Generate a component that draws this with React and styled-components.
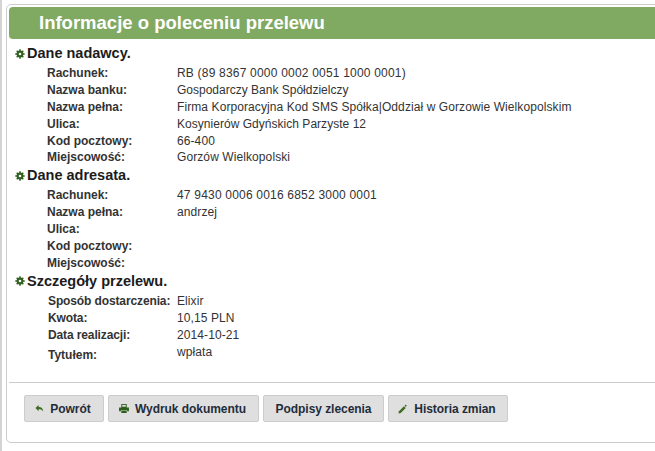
import React from 'react';
import styled, { createGlobalStyle } from 'styled-components';

const Global = createGlobalStyle`
  html, body { margin: 0; padding: 0; background: #fff; overflow: hidden; }
  body { font-family: "Liberation Sans", Arial, sans-serif; color: #222; }
`;
const Page = styled.div`
  width: 655px; height: 451px; box-sizing: border-box; overflow: hidden;
  border-left: 2px solid #d4d4d4; padding: 4px 0 0 4px;
`;
const Card = styled.div`
  width: 680px; height: 439px; box-sizing: border-box;
  border: 1px solid #ccc; border-radius: 5px; padding: 2px;
  display: flex; flex-direction: column;
`;
const Header = styled.h1`
  margin: 0; height: 32px; box-sizing: border-box; background: #80a962;
  border-radius: 4px; color: #fff; font-size: 18.5px; font-weight: bold;
  line-height: 32px; padding-left: 30px;
`;
const Body = styled.div`padding: 6px 0 0 6px; height: 343px; box-sizing: border-box;`;
const Heading = styled.div`
  display: flex; align-items: center; gap: 2px; height: 17px; margin-bottom: ${p => p.$mb}px;
  font-size: 14.5px; font-weight: bold; color: #1c1c1c; line-height: 17px;
`;
const Rows = styled.div`padding-left: ${p => p.$pad || 32}px; margin-bottom: 1px;`;
const Row = styled.div`
  display: flex; height: ${p => p.$h || 16.9}px; font-size: 12px; line-height: 17px;
`;
const Label = styled.div`
  width: ${p => p.$w || 130}px; flex: none; font-weight: bold; color: #333; white-space: nowrap;
  letter-spacing: ${p => p.$track || 0}px; padding-top: ${p => p.$top || 0}px;
`;
const Value = styled.div`
  color: #333; white-space: nowrap; letter-spacing: ${p => p.$track ?? 0.09}px;
`;
const Divider = styled.div`height: 1px; background: #ccc;`;
const Actions = styled.div`display: flex; gap: 4px; padding: 12px 0 0 15px;`;
const Button = styled.button`
  height: 27px; box-sizing: border-box; width: ${p => p.$w}px;
  padding: 0 ${p => (p.$icon ? 2 : 0)}px 0 0;
  border: 1px solid #ccc; border-radius: 2px; background: #dfdfdf;
  display: flex; align-items: center; justify-content: center; gap: 6px;
  font: bold 12px "Liberation Sans", Arial, sans-serif; color: #1f2d3a; letter-spacing: -0.05px;
`;

const Gear = () => (
  <svg width="10" height="10" viewBox="0 0 10 10">
    <g stroke="#2f5f1e" strokeWidth="1.5">
      <path d="M5 .3v9.4M.3 5h9.4M1.7 1.7l6.6 6.6M8.3 1.700 1.700 8.300" />
    </g>
    <circle cx="5" cy="5" r="3.4" fill="#2f5f1e" />
    <circle cx="5" cy="5" r="1.3" fill="#fff" />
  </svg>
);
const Back = () => (
  <svg width="9" height="9" viewBox="0 0 10 9">
    <path d="M4 0.500v2.200c3 0 5 1.500 5 5.300C8.200 5.800 6.500 5.200 4 5.200V7.500L0.500 4z" fill="#3b6b24" />
  </svg>
);
const Printer = () => (
  <svg width="10" height="9" viewBox="0 0 11 10">
    <path d="M2.500 0h6v4h-6z M0 4h11v4H9V7H2v1H0z M2.500 7.500h6V10h-6z" fill="#2f5f1e" />
    <path d="M3.500 1h4v2h-4z" fill="#dfdfdf" />
  </svg>
);
const Pencil = () => (
  <svg width="10" height="10" viewBox="0 0 11 11">
    <path d="M0.500 10.500 1 8l5.500-5.500 2 2L3 10z" fill="#3b6b24" />
    <path d="M8.500 0.500l.5 1 1 .5-1 .5-.5 1-.5-1-1-.5 1-.5z" fill="#3b6b24" />
  </svg>
);

const sender = [
  ['Rachunek:', 'RB (89 8367 0000 0002 0051 1000 0001)', 0.2],
  ['Nazwa banku:', 'Gospodarczy Bank Spółdzielczy', 0],
  ['Nazwa pełna:', 'Firma Korporacyjna Kod SMS Spółka|Oddział w Gorzowie Wielkopolskim', 0.09],
  ['Ulica:', 'Kosynierów Gdyńskich Parzyste 12', 0.03],
  ['Kod pocztowy:', '66-400', 0.09],
  ['Miejscowość:', 'Gorzów Wielkopolski', 0.09],
];
const receiver = [
  ['Rachunek:', '47 9430 0006 0016 6852 3000 0001', 0.2],
  ['Nazwa pełna:', 'andrzej', 0.09],
  ['Ulica:', ''],
  ['Kod pocztowy:', ''],
  ['Miejscowość:', ''],
];
const details = [
  ['Sposób dostarczenia:', 'Elixir'],
  ['Kwota:', '10,15 PLN'],
  ['Data realizacji:', '2014-10-21'],
];

export default function App() {
  return (
    <Page>
      <Global />
      <Card>
        <Header>Informacje o poleceniu przelewu</Header>
        <Body>
          <Heading $mb={3}><Gear />Dane nadawcy.</Heading>
          <Rows>
            {sender.map(([l, v, t]) => <Row key={l}><Label>{l}</Label><Value $track={t}>{v}</Value></Row>)}
          </Rows>
          <Heading $mb={3}><Gear />Dane adresata.</Heading>
          <Rows>
            {receiver.map(([l, v, t]) => <Row key={l}><Label>{l}</Label><Value $track={t}>{v}</Value></Row>)}
          </Rows>
          <Heading $mb={3}><Gear />Szczegóły przelewu.</Heading>
          <Rows $pad={33}>
            {details.map(([l, v]) => (
              <Row key={l} $h={17}><Label $w={129} $track={-0.12}>{l}</Label><Value>{v}</Value></Row>
            ))}
            <Row $h={22}>
              <Label $w={129} $top={3}>Tytułem:</Label><Value>wpłata</Value>
            </Row>
          </Rows>
        </Body>
        <Divider />
        <Actions>
          <Button $w={80} $icon><Back />Powrót</Button>
          <Button $w={151} $icon><Printer />Wydruk dokumentu</Button>
          <Button $w={121}>Podpisy zlecenia</Button>
          <Button $w={120} $icon><Pencil />Historia zmian</Button>
        </Actions>
      </Card>
    </Page>
  );
}
